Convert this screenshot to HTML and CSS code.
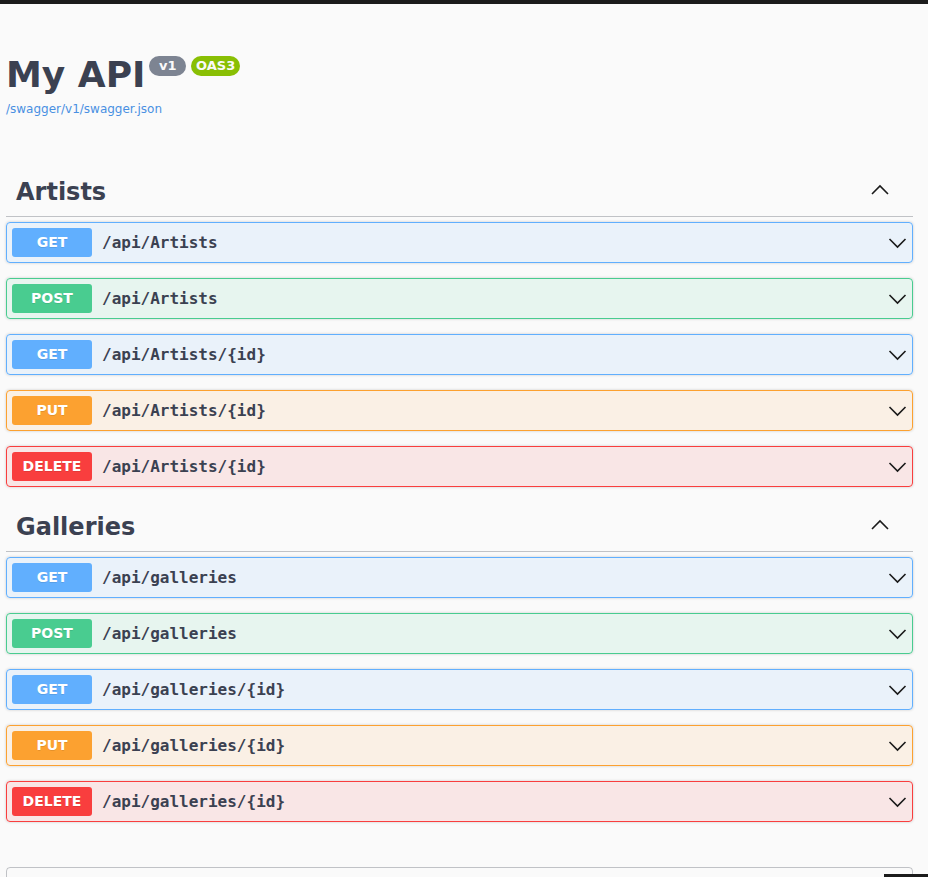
FILE: index.html
```html
<!DOCTYPE html>
<html>
<head>
<meta charset="utf-8">
<title>Swagger UI</title>
<link rel="stylesheet" href="styles.css">
</head>
<body>
<div class="topbar"></div>
<div class="wrapper">
  <div class="info">
    <h2 class="title">My API <small class="badge badge-v"><pre> v1 </pre></small><small class="badge badge-oas"><pre>OAS3</pre></small></h2>
    <a class="base-url" href="#">/swagger/v1/swagger.json</a>
  </div>

  <section class="tag-section">
    <h3 class="tag-heading"><span>Artists</span>
      <svg class="arrow-up" width="20" height="20" viewBox="0 0 20 20"><polyline points="2,12 10,4 18,12" /></svg>
    </h3>
    <div class="opblock get"><span class="method">GET</span><span class="path">/api/Artists</span><svg class="arrow" width="20" height="20" viewBox="0 0 20 20"><polyline points="2.5,6 10.5,14 18.5,6" /></svg></div>
    <div class="opblock post"><span class="method">POST</span><span class="path">/api/Artists</span><svg class="arrow" width="20" height="20" viewBox="0 0 20 20"><polyline points="2.5,6 10.5,14 18.5,6" /></svg></div>
    <div class="opblock get"><span class="method">GET</span><span class="path">/api/Artists/{id}</span><svg class="arrow" width="20" height="20" viewBox="0 0 20 20"><polyline points="2.5,6 10.5,14 18.5,6" /></svg></div>
    <div class="opblock put"><span class="method">PUT</span><span class="path">/api/Artists/{id}</span><svg class="arrow" width="20" height="20" viewBox="0 0 20 20"><polyline points="2.5,6 10.5,14 18.5,6" /></svg></div>
    <div class="opblock delete"><span class="method">DELETE</span><span class="path">/api/Artists/{id}</span><svg class="arrow" width="20" height="20" viewBox="0 0 20 20"><polyline points="2.5,6 10.5,14 18.5,6" /></svg></div>
  </section>

  <section class="tag-section">
    <h3 class="tag-heading"><span>Galleries</span>
      <svg class="arrow-up" width="20" height="20" viewBox="0 0 20 20"><polyline points="2,12 10,4 18,12" /></svg>
    </h3>
    <div class="opblock get"><span class="method">GET</span><span class="path">/api/galleries</span><svg class="arrow" width="20" height="20" viewBox="0 0 20 20"><polyline points="2.5,6 10.5,14 18.5,6" /></svg></div>
    <div class="opblock post"><span class="method">POST</span><span class="path">/api/galleries</span><svg class="arrow" width="20" height="20" viewBox="0 0 20 20"><polyline points="2.5,6 10.5,14 18.5,6" /></svg></div>
    <div class="opblock get"><span class="method">GET</span><span class="path">/api/galleries/{id}</span><svg class="arrow" width="20" height="20" viewBox="0 0 20 20"><polyline points="2.5,6 10.5,14 18.5,6" /></svg></div>
    <div class="opblock put"><span class="method">PUT</span><span class="path">/api/galleries/{id}</span><svg class="arrow" width="20" height="20" viewBox="0 0 20 20"><polyline points="2.5,6 10.5,14 18.5,6" /></svg></div>
    <div class="opblock delete"><span class="method">DELETE</span><span class="path">/api/galleries/{id}</span><svg class="arrow" width="20" height="20" viewBox="0 0 20 20"><polyline points="2.5,6 10.5,14 18.5,6" /></svg></div>
  </section>

  <section class="models"></section>
</div>
<div class="corner"></div>
</body>
</html>
```
FILE: styles.css
```css
html, body {
  margin: 0;
  padding: 0;
  background: #fafafa;
  overflow: hidden;
  height: 877px;
}
body {
  font-family: "DejaVu Sans", sans-serif;
  color: #3b4151;
}
.topbar {
  height: 4px;
  background: #1b1b1b;
}
.wrapper {
  padding: 0 15px 0 6px;
}
.info {
  margin: 50px 0 51px;
}
.title {
  margin: 0;
  font-size: 36px;
  font-weight: bold;
  color: #3b4151;
  display: flex;
  align-items: flex-start;
  line-height: 42px;
}
.badge {
  display: inline-block;
  border-radius: 57px;
  margin-top: 2px;
  padding: 2px 5px;
}
.badge pre {
  margin: 0;
  font-family: "DejaVu Sans", sans-serif;
  font-size: 13px;
  line-height: 16px;
  font-weight: bold;
  color: #fafafa;
}
.badge-v {
  background: #7d8492;
  margin-left: 4px;
}
.badge-oas {
  background: #89bf04;
  margin-left: 5px;
}
.base-url {
  display: block;
  margin-top: 6px;
  font-size: 12px;
  line-height: 14px;
  color: #4990e2;
  text-decoration: none;
}
.tag-heading {
  margin: 0 0 5px;
  padding: 10px 20px 10px 10px;
  height: 29px;
  display: flex;
  align-items: center;
  justify-content: space-between;
  font-size: 24px;
  font-weight: bold;
  color: #3b4151;
  border-bottom: 1px solid rgba(59, 65, 81, 0.3);
}
.arrow-up {
  margin-right: 3px;
}
.arrow-up polyline,
.arrow polyline {
  fill: none;
  stroke: #1a1a1a;
  stroke-width: 1.6;
}
.opblock {
  display: flex;
  align-items: center;
  padding: 5px;
  margin: 0 0 15px;
  border: 1px solid;
  border-radius: 4px;
  box-shadow: 0 0 3px rgba(0, 0, 0, 0.19);
}
.method {
  min-width: 80px;
  padding: 6px 0;
  text-align: center;
  font-size: 14px;
  line-height: 17px;
  font-weight: bold;
  color: #fff;
  border-radius: 3px;
  text-shadow: 0 1px 0 rgba(0, 0, 0, 0.1);
}
.path {
  flex: 1;
  padding: 0 10px;
  font-family: "DejaVu Sans Mono", monospace;
  font-size: 16px;
  font-weight: bold;
  color: #3b4151;
}
.get { background: rgba(97, 175, 254, 0.1); border-color: #61affe; }
.get .method { background: #61affe; }
.post { background: rgba(73, 204, 144, 0.1); border-color: #49cc90; }
.post .method { background: #49cc90; }
.put { background: rgba(252, 161, 48, 0.1); border-color: #fca130; }
.put .method { background: #fca130; }
.delete { background: rgba(249, 62, 62, 0.1); border-color: #f93e3e; }
.delete .method { background: #f93e3e; }
.models {
  margin-top: 45px;
  height: 60px;
  border: 1px solid rgba(59, 65, 81, 0.3);
  border-radius: 4px;
}
.corner {
  position: fixed;
  right: 0;
  bottom: 0;
  width: 44px;
  height: 3px;
  background: #1b1b1b;
}
```
